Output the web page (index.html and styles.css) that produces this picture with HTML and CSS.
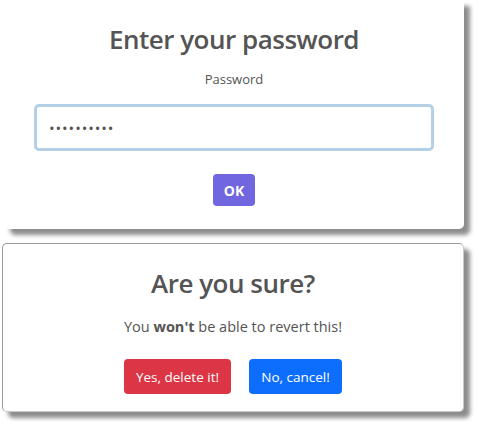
FILE: index.html
```html
<!DOCTYPE html>
<html>
<head>
<meta charset="utf-8">
<link rel="stylesheet" href="styles.css">
</head>
<body>
<div class="page">
  <div class="card card-prompt">
    <h2 class="title">Enter your password</h2>
    <label class="label" for="pw">Password</label>
    <input class="input" id="pw" type="password" value="password12">
    <div class="actions">
      <button class="btn btn-ok">OK</button>
    </div>
  </div>
  <div class="card card-confirm">
    <h2 class="title">Are you sure?</h2>
    <p class="text">You <b>won't</b> be able to revert this!</p>
    <div class="actions actions-two">
      <button class="btn btn-danger">Yes, delete it!</button>
      <button class="btn btn-primary">No, cancel!</button>
    </div>
  </div>
</div>
</body>
</html>
```
FILE: styles.css
```css
html, body {
  margin: 0;
  padding: 0;
  background: #ffffff;
}
body {
  width: 479px;
  height: 427px;
  overflow: hidden;
  font-family: "Open Sans", "Noto Sans", sans-serif;
  color: #545454;
}
.page {
  display: flex;
  flex-direction: column;
}
.card {
  box-sizing: border-box;
  background: #fff;
  border-radius: 5px;
  box-shadow: 6px 6px 4px rgba(0, 0, 0, 0.45);
  display: flex;
  flex-direction: column;
  align-items: center;
}
.card-prompt {
  margin-left: 4px;
  width: 460px;
  height: 229px;
  padding-top: 22px;
  border-top-left-radius: 0;
  border-top-right-radius: 0;
}
.card-confirm {
  margin-top: 14px;
  margin-left: 2px;
  width: 462px;
  height: 169px;
  padding-top: 22px;
  border: 1px solid #9a9a9a;
  border-right-color: #c8c8c8;
  border-bottom-color: #c8c8c8;
}
.title {
  margin: 0;
  font-size: 26px;
  line-height: 34px;
  letter-spacing: -0.5px;
  font-weight: 600;
  color: #545454;
}
.label {
  margin-top: 13px;
  font-size: 13px;
  line-height: 20px;
  color: #545454;
}
.input {
  box-sizing: border-box;
  margin-top: 15px;
  width: 400px;
  height: 47px;
  padding: 0 12px;
  border: 3px solid #b4d0e7;
  border-radius: 5px;
  outline: none;
  font-family: "Open Sans", sans-serif;
  font-size: 15px;
  letter-spacing: 0.9px;
  color: #545454;
  background: #fff;
}
.actions {
  display: flex;
  justify-content: center;
  gap: 18px;
  margin-top: 23px;
}
.actions-two {
  margin-top: 20px;
}
.text {
  margin: 15px 0 0;
  font-size: 14.5px;
  line-height: 24px;
  color: #545454;
}
.text b {
  font-weight: 700;
}
.btn {
  border: 0;
  border-radius: 4px;
  color: #fff;
  font-family: "Open Sans", sans-serif;
  cursor: pointer;
}
.btn-ok {
  width: 42px;
  height: 32px;
  padding: 0;
  background: #7066e0;
  font-size: 14px;
  font-weight: 700;
}
.btn-danger {
  width: 107px;
  height: 35px;
  padding: 0;
  background: #dc3545;
  font-size: 13.5px;
}
.btn-primary {
  width: 93px;
  height: 35px;
  padding: 0;
  background: #0d6efd;
  font-size: 13.5px;
}
```
